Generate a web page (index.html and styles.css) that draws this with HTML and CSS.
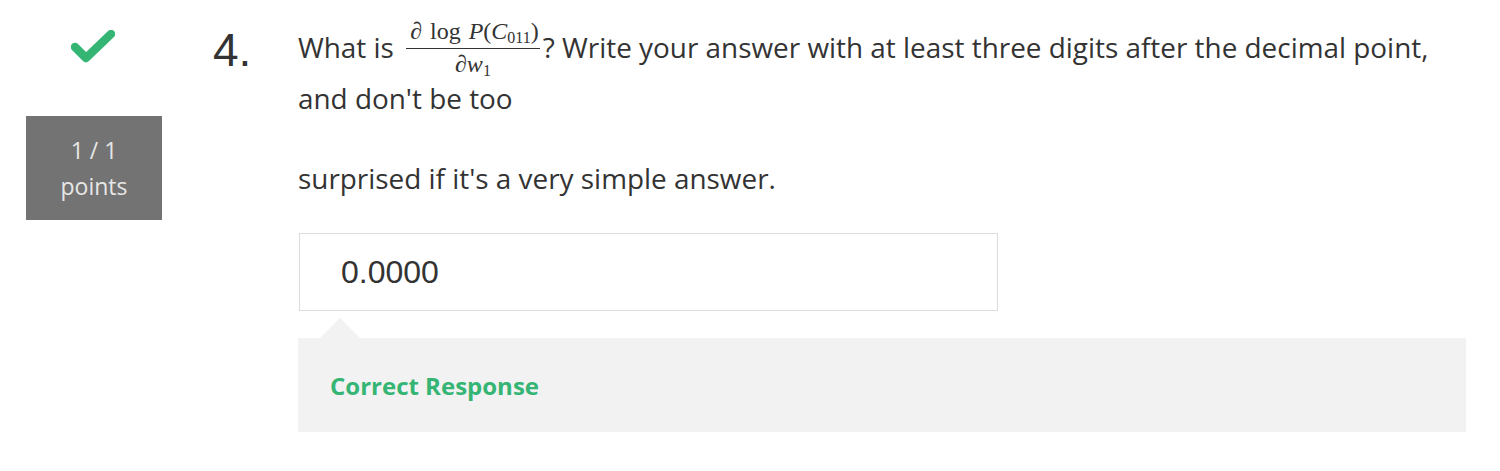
FILE: index.html
```html
<!DOCTYPE html>
<html>
<head>
<meta charset="utf-8">
<link rel="stylesheet" href="styles.css">
</head>
<body>
<div class="question">
  <div class="aside">
    <svg class="check" width="44" height="33" viewBox="0 0 44 33">
      <path d="M4 17 L15 28 L40 4" fill="none" stroke="#35b574" stroke-width="8.5" stroke-linecap="round" stroke-linejoin="round"/>
    </svg>
    <div class="points"><span>1 / 1</span><span>points</span></div>
  </div>
  <div class="num">4.</div>
  <div class="content">
    <p class="prompt">What is <span class="frac"><span class="numer"><i>∂</i><span class="sp">log</span><i>P</i>(<i>C</i><sub>011</sub>)</span><span class="denom"><i>∂w</i><sub>1</sub></span></span>? Write your answer with at least three digits after the decimal point, and don't be too</p>
    <p class="prompt second">surprised if it's a very simple answer.</p>
    <div class="answer">0.0000</div>
    <div class="feedback">
      <span class="ok">Correct Response</span>
    </div>
  </div>
</div>
</body>
</html>
```

FILE: styles.css
```css
html, body {
  margin: 0;
  padding: 0;
  background: #fff;
}
body {
  font-family: "Open Sans", "Liberation Sans", sans-serif;
  color: #333;
}
.question {
  display: flex;
  align-items: flex-start;
}
.aside {
  width: 188px;
  display: flex;
  flex-direction: column;
  align-items: center;
  padding-top: 30px;
}
.check {
  display: block;
  margin-left: -2px;
}
.points {
  margin-top: 53px;
  width: 136px;
  height: 104px;
  background: #737373;
  color: #e6e6e6;
  font-size: 23px;
  line-height: 36px;
  display: flex;
  flex-direction: column;
  align-items: center;
  justify-content: center;
}
.num {
  margin-left: 25px;
  width: 85px;
  font-family: "Liberation Sans", Arial, sans-serif;
  font-size: 46px;
  line-height: 1;
  padding-top: 27px;
  color: #333;
}
.content {
  width: 1168px;
  padding-top: 19px;
}
.prompt {
  margin: 0;
  font-size: 27.9px;
  line-height: 44px;
}
.prompt.second {
  margin-top: 36px;
}
.frac {
  display: inline-flex;
  flex-direction: column;
  align-items: center;
  vertical-align: 19px;
  font-family: "Liberation Serif", "Times New Roman", serif;
  font-size: 24px;
  line-height: 24px;
  margin: 0 3px 0 5px;
}
.frac sub {
  font-size: 16px;
  vertical-align: -4px;
  line-height: 0;
}
.sp {
  margin: 0 8px;
}
.numer {
  padding: 0 1px 5px 4px;
  border-bottom: 1.5px solid #333;
}
.denom {
  padding-top: 3px;
}
.answer {
  margin-top: 33px;
  width: 656px;
  height: 76px;
  border: 1px solid #dcdcdc;
  padding-left: 41px;
  font-family: "Liberation Sans", Arial, sans-serif;
  font-size: 32px;
  line-height: 76px;
  color: #333;
  margin-left: 1px;
}
.feedback {
  position: relative;
  margin-top: 27px;
  height: 94px;
  background: #f2f2f2;
  padding-left: 32px;
  display: flex;
  align-items: center;
}
.feedback::before {
  content: "";
  position: absolute;
  left: 22px;
  top: -20px;
  border-left: 20px solid transparent;
  border-right: 20px solid transparent;
  border-bottom: 20px solid #f2f2f2;
}
.ok {
  color: #35b574;
  font-weight: 700;
  font-size: 24px;
}
```
